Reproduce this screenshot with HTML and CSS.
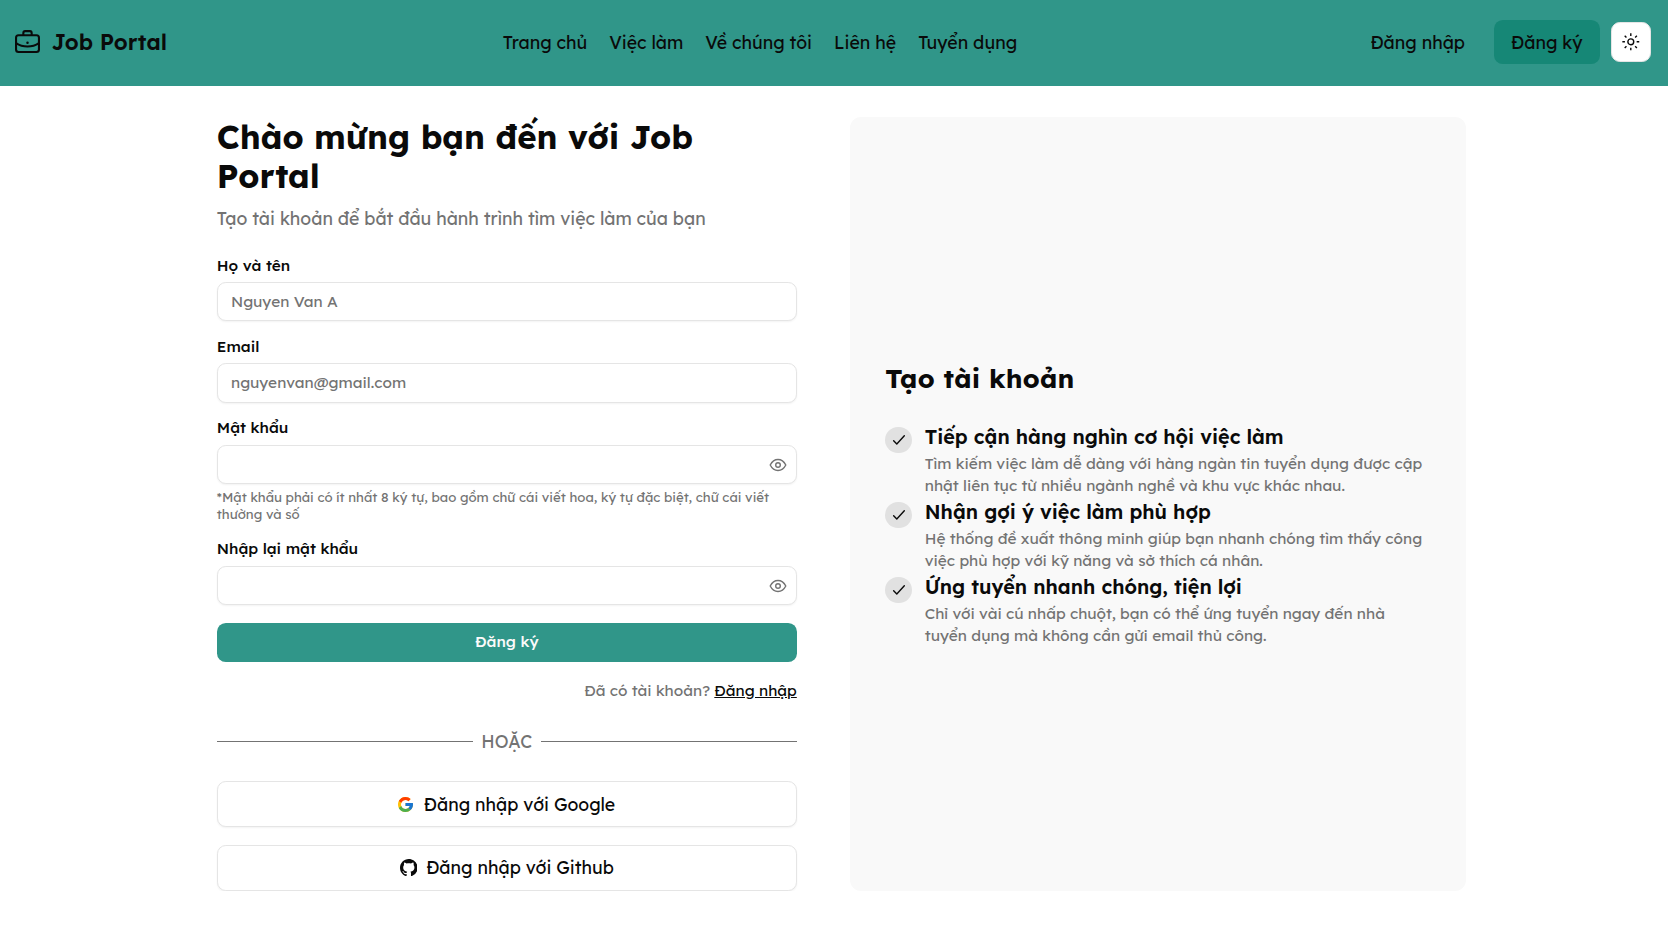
FILE: index.html
```html
<!DOCTYPE html>
<html lang="vi">
<head>
<meta charset="utf-8">
<title>Job Portal</title>
<link rel="stylesheet" href="styles.css">
</head>
<body>
<header class="topbar">
  <a class="brand">
    <svg class="brand-icon" viewBox="0 0 24 22" fill="none" stroke="currentColor" stroke-width="2" stroke-linejoin="round"><rect x="1" y="5" width="22" height="16" rx="2.4"/><path d="M8 5V2.800C8 1.600 8.600 1 9.700 1h4.600c1.100 0 1.700.6 1.700 1.800v2.200M1 12.600c6.500 4.300 15.500 4.300 22 0"/><circle cx="12" cy="12.100" r="1.200" fill="currentColor" stroke="none"/></svg>
    <span class="brand-name">Job Portal</span>
  </a>
  <nav class="nav">
    <a>Trang chủ</a>
    <a>Việc làm</a>
    <a>Về chúng tôi</a>
    <a>Liên hệ</a>
    <a>Tuyển dụng</a>
  </nav>
  <div class="actions">
    <a class="login">Đăng nhập</a>
    <a class="register">Đăng ký</a>
    <button class="theme" aria-label="Theme"><svg viewBox="0 0 15 15" fill="none" stroke="currentColor" stroke-width="1.200"><circle cx="7.5" cy="7.5" r="2.500"/><path d="M7.500.3v2.200M7.500 12.500v2.200M.3 7.500h2.200M12.500 7.500h2.200M2.300 2.300l1.500 1.500M11.200 11.200l1.500 1.500M2.300 12.700l1.500-1.500M11.200 3.800l1.500-1.500"/></svg></button>
  </div>
</header>
<main class="page">
  <section class="signup">
    <h1 class="title">Chào mừng bạn đến với Job Portal</h1>
    <p class="subtitle">Tạo tài khoản để bắt đầu hành trình tìm việc làm của bạn</p>
    <form class="form">
      <div class="field">
        <label>Họ và tên</label>
        <input class="input" type="text" placeholder="Nguyen Van A">
      </div>
      <div class="field">
        <label>Email</label>
        <input class="input" type="text" placeholder="nguyenvan@gmail.com">
      </div>
      <div class="field">
        <label>Mật khẩu</label>
        <div class="input password">
          <svg class="eye" viewBox="0 0 18 14" fill="none" stroke="currentColor" stroke-width="1.400"><path d="M1.200 7C2.900 3.700 5.500 1.500 9 1.500S15.100 3.700 16.800 7C15.100 10.300 12.500 12.500 9 12.500S2.900 10.300 1.200 7z" stroke-linejoin="round"/><circle cx="9" cy="7" r="2.300"/></svg>
        </div>
        <p class="hint">*Mật khẩu phải có ít nhất 8 ký tự, bao gồm chữ cái viết hoa, ký tự đặc biệt, chữ cái viết thường và số</p>
      </div>
      <div class="field">
        <label>Nhập lại mật khẩu</label>
        <div class="input password">
          <svg class="eye" viewBox="0 0 18 14" fill="none" stroke="currentColor" stroke-width="1.400"><path d="M1.200 7C2.900 3.700 5.500 1.500 9 1.500S15.100 3.700 16.800 7C15.100 10.300 12.500 12.500 9 12.500S2.900 10.300 1.200 7z" stroke-linejoin="round"/><circle cx="9" cy="7" r="2.300"/></svg>
        </div>
      </div>
      <button class="submit" type="button">Đăng ký</button>
    </form>
    <p class="have-account">Đã có tài khoản? <a class="signin">Đăng nhập</a></p>
    <div class="divider"><span>HOẶC</span></div>
    <div class="providers">
      <button class="provider google">
        <svg class="google-icon" viewBox="4 4 40 40"><path fill="#FFC107" d="M43.611 20.083H42V20H24v8h11.303c-1.649 4.657-6.080 8-11.303 8-6.627 0-12-5.373-12-12s5.373-12 12-12c3.059 0 5.842 1.154 7.961 3.039l5.657-5.657C34.046 6.053 29.268 4 24 4 12.955 4 4 12.955 4 24s8.955 20 20 20 20-8.955 20-20c0-1.341-.138-2.650-.389-3.917z"/><path fill="#FF3D00" d="M6.306 14.691l6.571 4.819C14.655 15.108 18.961 12 24 12c3.059 0 5.842 1.154 7.961 3.039l5.657-5.657C34.046 6.053 29.268 4 24 4 16.318 4 9.656 8.337 6.306 14.691z"/><path fill="#4CAF50" d="M24 44c5.166 0 9.860-1.977 13.409-5.192l-6.190-5.238C29.211 35.091 26.715 36 24 36c-5.202 0-9.619-3.317-11.283-7.946l-6.522 5.025C9.505 39.556 16.227 44 24 44z"/><path fill="#1976D2" d="M43.611 20.083H42V20H24v8h11.303c-.792 2.237-2.231 4.166-4.087 5.571l6.193 5.238C36.971 39.205 44 34 44 24c0-1.341-.138-2.650-.389-3.917z"/></svg>
        <span>Đăng nhập với Google</span>
      </button>
      <button class="provider github">
        <svg class="github-icon" viewBox="0 0 16 16" fill="currentColor"><path d="M8 0C3.580 0 0 3.580 0 8c0 3.540 2.290 6.530 5.470 7.590.4.070.55-.17.55-.38 0-.19-.01-.82-.01-1.490-2.010.37-2.530-.49-2.690-.94-.09-.23-.48-.94-.82-1.130-.28-.15-.68-.52-.01-.53.63-.01 1.080.58 1.230.82.72 1.210 1.870.87 2.330.66.070-.52.28-.87.51-1.070-1.780-.2-3.640-.89-3.640-3.950 0-.87.31-1.590.82-2.150-.08-.2-.36-1.020.08-2.120 0 0 .67-.21 2.200.82.64-.18 1.320-.27 2-.27s1.360.09 2 .27c1.530-1.040 2.200-.82 2.200-.82.44 1.100.16 1.920.08 2.120.51.56.82 1.270.82 2.150 0 3.070-1.870 3.750-3.650 3.950.29.25.54.73.54 1.480 0 1.070-.01 1.930-.01 2.200 0 .21.15.46.55.38A8.010 8.010 0 0 0 16 8c0-4.420-3.580-8-8-8z"/></svg>
        <span>Đăng nhập với Github</span>
      </button>
    </div>
  </section>
  <aside class="panel">
    <h2 class="panel-title">Tạo tài khoản</h2>
    <ul class="benefits">
      <li class="benefit">
        <span class="tick"><svg viewBox="0 0 15 15" fill="none" stroke="currentColor" stroke-width="1.200" stroke-linecap="round" stroke-linejoin="round"><path d="M3.100 8.300l2.700 2.700L12.200 4.100"/></svg></span>
        <div><h3>Tiếp cận hàng nghìn cơ hội việc làm</h3><p>Tìm kiếm việc làm dễ dàng với hàng ngàn tin tuyển dụng được cập nhật liên tục từ nhiều ngành nghề và khu vực khác nhau.</p></div>
      </li>
      <li class="benefit">
        <span class="tick"><svg viewBox="0 0 15 15" fill="none" stroke="currentColor" stroke-width="1.200" stroke-linecap="round" stroke-linejoin="round"><path d="M3.100 8.300l2.700 2.700L12.200 4.100"/></svg></span>
        <div><h3>Nhận gợi ý việc làm phù hợp</h3><p>Hệ thống đề xuất thông minh giúp bạn nhanh chóng tìm thấy công việc phù hợp với kỹ năng và sở thích cá nhân.</p></div>
      </li>
      <li class="benefit">
        <span class="tick"><svg viewBox="0 0 15 15" fill="none" stroke="currentColor" stroke-width="1.200" stroke-linecap="round" stroke-linejoin="round"><path d="M3.100 8.300l2.700 2.700L12.200 4.100"/></svg></span>
        <div><h3>Ứng tuyển nhanh chóng, tiện lợi</h3><p>Chỉ với vài cú nhấp chuột, bạn có thể ứng tuyển ngay đến nhà tuyển dụng mà không cần gửi email thủ công.</p></div>
      </li>
    </ul>
  </aside>
</main>
</body>
</html>
```
FILE: styles.css
```css
* { box-sizing: border-box; margin: 0; padding: 0; }
body {
  background: #fff;
  color: #0a0a0a;
  font-family: Lexend, Inter, sans-serif;
  font-size: 17.66px;
  line-height: 26.4px;
}
button, input { font: inherit; color: inherit; }
svg { display: block; flex: none; }

.topbar {
  display: flex;
  align-items: center;
  justify-content: space-between;
  height: 86px;
  padding: 0 17px 2px 15px;
  background: #309689;
}
.brand { display: flex; align-items: center; gap: 11.400px; }
.brand-icon { width: 25px; height: 23px; margin-bottom: 2px; }
.brand-name { font-size: 22px; font-weight: 600; }
.nav { display: flex; gap: 22px; padding-top: 1px; }
.actions { display: flex; align-items: center; gap: 11px; }
.login { padding: 1px 17.6px 0; }
.register {
  padding: 9px 17.4px 8.600px;
  border-radius: 8.800px;
  background: #168776;
}
.theme {
  display: grid;
  place-items: center;
  width: 40px;
  height: 40px;
  border: 1px solid #e5e5e5;
  border-radius: 8.800px;
  background: #fff;
}
.theme svg { width: 17.6px; height: 17.6px; }

.page {
  display: grid;
  grid-template-columns: 580px 616px;
  gap: 53.200px;
  padding: 31px 0 0 216.800px;
}
.title { font-size: 33px; font-weight: 700; line-height: 39.200px; }
.subtitle { margin-top: 9.600px; color: #737373; }
.form { display: grid; gap: 17.6px; margin-top: 26.200px; font-size: 15.4px; }
.field label { display: block; margin-bottom: 8.800px; font-weight: 500; line-height: 15.4px; }
.input {
  display: block;
  width: 100%;
  height: 39.6px;
  padding: 0 13.200px;
  border: 1px solid #e5e5e5;
  border-radius: 8.800px;
  background: #fff;
  box-shadow: 0 1px 2px rgba(0, 0, 0, .05);
}
.input::placeholder { color: #737373; opacity: 1; }
.password { display: flex; align-items: center; justify-content: flex-end; padding: 1px 9px 0; color: #737373; }
.eye { width: 18px; height: 14px; }
.hint { margin-top: 4.400px; color: #737373; font-size: 13.200px; line-height: 17.6px; }
.submit {
  height: 39.6px;
  padding-bottom: 1px;
  border: 0;
  border-radius: 8.800px;
  background: #309689;
  color: #fafafa;
  font-weight: 500;
  line-height: 22px;
}
.have-account {
  margin-top: 17.6px;
  color: #737373;
  font-size: 15.4px;
  line-height: 22px;
  text-align: right;
}
.signin { color: #0a0a0a; text-decoration: underline; }
.divider { display: flex; align-items: center; gap: 8.800px; margin-top: 26.4px; color: #737373; }
.divider::before, .divider::after { content: ""; flex: 1; height: 1px; background: #737373; }
.providers { display: grid; gap: 17.6px; margin-top: 26.4px; }
.provider {
  display: flex;
  align-items: center;
  justify-content: center;
  height: 46.2px;
  border: 1px solid #e5e5e5;
  border-radius: 8.800px;
  background: #fff;
  box-shadow: 0 1px 2px rgba(0, 0, 0, .05);
}
.google { gap: 10.400px; }
.github { gap: 8.800px; padding-bottom: 1px; }
.google-icon { width: 15px; height: 15px; }
.github-icon { width: 17.6px; height: 17.6px; }

.panel {
  display: flex;
  flex-direction: column;
  justify-content: center;
  padding: 0 35.200px;
  border-radius: 11px;
  background: #f9f9f9;
}
.panel-title { font-size: 26.4px; font-weight: 700; line-height: 35.200px; letter-spacing: .24px; }
.benefits { margin-top: 26.4px; list-style: none; }
.benefit { display: flex; gap: 13.200px; height: 75px; }
.tick {
  display: grid;
  place-items: center;
  flex: none;
  width: 26.4px;
  height: 26.4px;
  margin-top: 4.200px;
  border-radius: 50%;
  background: #e1e1e1;
}
.tick svg { width: 17.6px; height: 17.6px; }
.benefit h3 { font-size: 19.8px; font-weight: 600; line-height: 30.8px; }
.benefit p { color: #737373; font-size: 15.4px; line-height: 22px; }
```
